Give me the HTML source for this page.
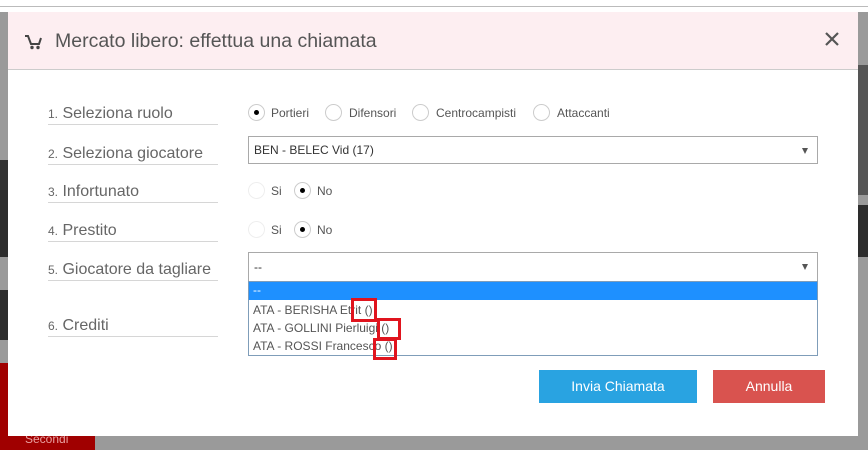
<!DOCTYPE html>
<html><head><meta charset="utf-8"><style>
*{box-sizing:border-box;margin:0;padding:0}
body{width:868px;height:450px;overflow:hidden;background:#9a9a9a;font-family:"Liberation Sans",sans-serif;position:relative}
.a{position:absolute}
.lbl{position:absolute;left:48px;width:170px;border-bottom:1px solid #d6d6d6;font-size:16px;color:#666;font-weight:300;padding-bottom:1px}
.lbl small{font-size:12px}
.r{position:absolute;width:17px;height:17px;border:1px solid #ccc;border-radius:50%;background:#fff}
.r.on::after{content:"";position:absolute;left:5px;top:5px;width:5px;height:5px;border-radius:50%;background:#000}
.rt{position:absolute;font-size:12px;color:#555}
.sel{position:absolute;left:248px;width:570px;border:1px solid #a9a9a9;background:#fff;font-size:12px;color:#333;padding-left:5px}
.sel::after{content:"";position:absolute;right:9px;top:11px;border-left:3px solid transparent;border-right:3px solid transparent;border-top:6px solid #555}
.opt{position:absolute;left:253px;font-size:12px;color:#555}
.box{position:absolute;border:3px solid #e0141e}
</style></head><body>
<div class="a" style="left:0;top:0;width:868px;height:12px;background:#fff"></div>
<div class="a" style="left:0;top:6px;width:868px;height:1px;background:#bbb"></div>
<div class="a" style="left:0;top:160px;width:8px;height:30px;background:#333"></div>
<div class="a" style="left:0;top:190px;width:8px;height:67px;background:#2d2d2d"></div>
<div class="a" style="left:0;top:290px;width:8px;height:50px;background:#2d2d2d"></div>
<div class="a" style="left:0;top:363px;width:95px;height:87px;background:#a00000"></div>
<div class="a" style="left:25px;top:432px;color:#e9a0a0;font-size:12px">Secondi</div>
<div class="a" style="left:858px;top:65px;width:10px;height:130px;background:#555"></div>
<div class="a" style="left:858px;top:205px;width:10px;height:52px;background:#2d2d2d"></div>
<div class="a" style="left:8px;top:12px;width:850px;height:424px;background:#fff">
  <div class="a" style="left:0;top:0;width:850px;height:58px;background:#fdeef1;border-bottom:1px solid #ccc"></div>
  <svg class="a" style="left:16px;top:22px" width="18" height="16" viewBox="0 0 18 16"><path d="M1 2h3l3 8h8l2-6" stroke="#444" stroke-width="2" fill="none"/><circle cx="8" cy="13.5" r="1.7" fill="#444"/><circle cx="14" cy="13.5" r="1.7" fill="#444"/></svg>
  <div class="a" style="left:47px;top:18px;font-size:19.5px;color:#555">Mercato libero: effettua una chiamata</div>
  <svg class="a" style="left:817px;top:20px" width="14" height="14" viewBox="0 0 14 14"><path d="M1 1L13 13M13 1L1 13" stroke="#555" stroke-width="2.2"/></svg>
</div>
<div class="lbl" style="top:105px"><small>1.</small> Seleziona ruolo</div>
<div class="lbl" style="top:145px"><small>2.</small> Seleziona giocatore</div>
<div class="lbl" style="top:183px"><small>3.</small> Infortunato</div>
<div class="lbl" style="top:222px"><small>4.</small> Prestito</div>
<div class="lbl" style="top:261px"><small>5.</small> Giocatore da tagliare</div>
<div class="lbl" style="top:317px"><small>6.</small> Crediti</div>
<div class="r on" style="left:248px;top:104px"></div><div class="rt" style="left:271px;top:106px">Portieri</div>
<div class="r" style="left:325px;top:104px"></div><div class="rt" style="left:349px;top:106px">Difensori</div>
<div class="r" style="left:412px;top:104px"></div><div class="rt" style="left:436px;top:106px">Centrocampisti</div>
<div class="r" style="left:533px;top:104px"></div><div class="rt" style="left:557px;top:106px">Attaccanti</div>
<div class="sel" style="top:136px;height:28px;line-height:26px">BEN - BELEC Vid (17)</div>
<div class="r" style="left:248px;top:182px;border-color:#eee"></div><div class="rt" style="left:271px;top:184px">Si</div>
<div class="r on" style="left:294px;top:182px"></div><div class="rt" style="left:317px;top:184px">No</div>
<div class="r" style="left:248px;top:221px;border-color:#eee"></div><div class="rt" style="left:271px;top:223px">Si</div>
<div class="r on" style="left:294px;top:221px"></div><div class="rt" style="left:317px;top:223px">No</div>
<div class="sel" style="top:252px;height:30px;line-height:28px">--</div>
<div class="a" style="left:248px;top:281px;width:570px;height:75px;border:1px solid #7f9db9;background:#fff"></div>
<div class="a" style="left:249px;top:282px;width:568px;height:18px;background:#1e90ff;color:#fff;font-size:12px;padding-left:4px;line-height:16px">--</div>
<div class="opt" style="top:303px">ATA - BERISHA Etrit ()</div>
<div class="opt" style="top:321px">ATA - GOLLINI Pierluigi ()</div>
<div class="opt" style="top:339px">ATA - ROSSI Francesco ()</div>
<div class="box" style="left:351px;top:298px;width:26px;height:24px"></div>
<div class="box" style="left:377px;top:318px;width:24px;height:22px"></div>
<div class="box" style="left:373px;top:338px;width:24px;height:22px"></div>
<div class="a" style="left:539px;top:370px;width:158px;height:33px;background:#29a3e1;color:#fff;font-size:14px;text-align:center;line-height:33px">Invia Chiamata</div>
<div class="a" style="left:713px;top:370px;width:112px;height:33px;background:#d9534f;color:#fff;font-size:14px;text-align:center;line-height:33px">Annulla</div>
</body></html>
